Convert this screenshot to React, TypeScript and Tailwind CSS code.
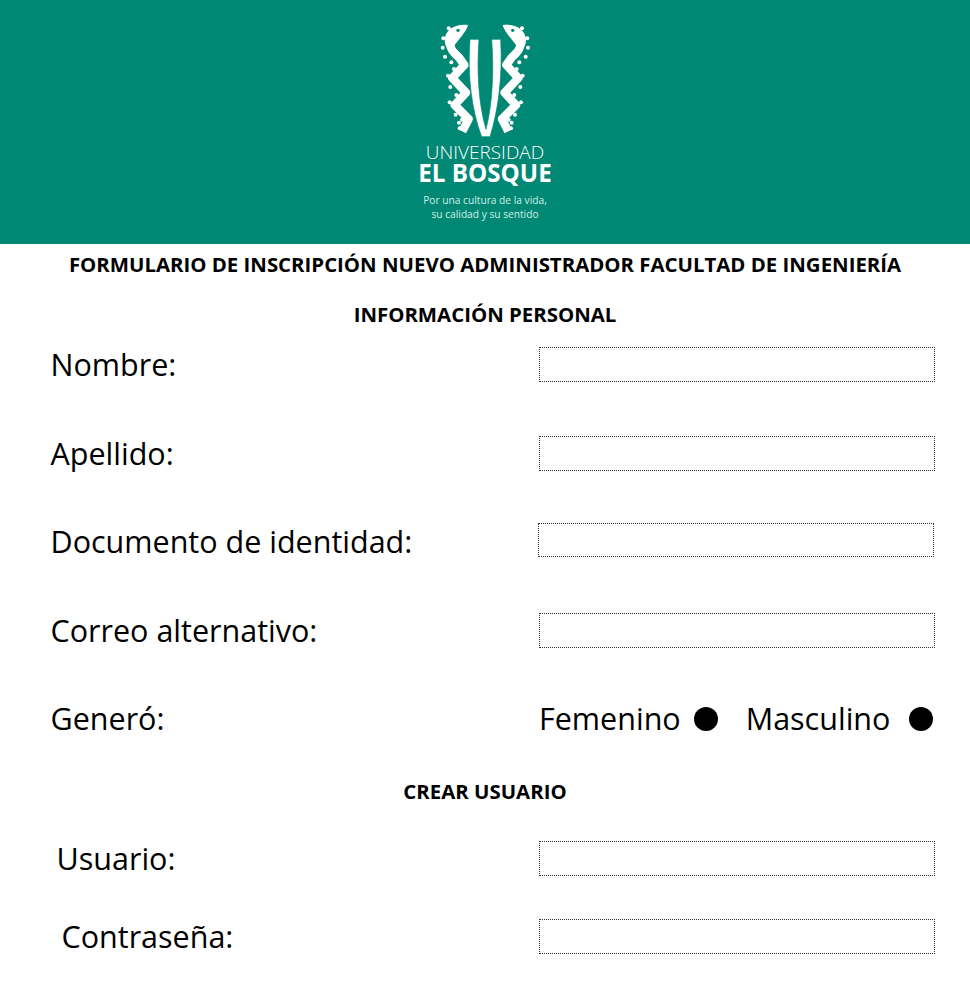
const font = "font-['Open_Sans',sans-serif]";

function Logo() {
  const dots = [
    [116, 55], [100, 85], [98, 113], [105, 140], [124, 157], [132, 177], [114, 197],
    [121, 231], [139, 255], [119, 277], [137, 314], [156, 329], [147, 338], [149, 355],
  ];
  const snake = (
    <>
      <path
        d="M120 92 C118 116 130 126 148 144 L163 165 L127 204 L168 248 L134 285 L176 327 L157 364"
        fill="none"
        stroke="#fff"
        strokeWidth="25"
        strokeLinejoin="round"
      />
      <path d="M104 92 C104 60 134 40 174 45 C170 62 152 82 138 100 C130 116 110 116 106 104Z" fill="#fff" />
      <circle cx="144" cy="61" r="5" fill="#008875" />
      {dots.map(([x, y]) => (
        <circle key={`${x}-${y}`} cx={x} cy={y} r="6" fill="#fff" />
      ))}
    </>
  );

  return (
    <svg viewBox="0 0 450 405" className="h-[135px] w-[150px]">
      <g>{snake}</g>
      <g transform="translate(452 0) scale(-1 1)">{snake}</g>
      <path
        d="M180 88 L207 88 C200 180 205 280 228 358 C248 280 252 180 245 88 L272 88 C278 200 265 300 240 380 L215 380 C185 300 172 200 180 88Z"
        fill="#fff"
        stroke="#008875"
        strokeWidth="2"
      />
    </svg>
  );
}

function Field({ className = "" }: { className?: string }) {
  return <div className={`h-[35px] w-[396px] border border-dotted border-[#333] bg-white ${className}`} />;
}

function Row({
  label,
  labelClass = "",
  fieldClass = "",
  className = "",
}: {
  label: string;
  labelClass?: string;
  fieldClass?: string;
  className?: string;
}) {
  return (
    <div className={`flex items-start ${className}`}>
      <span className={`w-[488.5px] text-[30.5px] leading-[35px] ${labelClass}`}>{label}</span>
      <Field className={fieldClass} />
    </div>
  );
}

export default function App() {
  return (
    <div className={`min-h-[1000px] bg-white text-black ${font}`}>
      <header className="flex h-[244px] flex-col items-center bg-[#008875] text-white">
        <div className="mt-[10px]">
          <Logo />
        </div>
        <p className="-mt-[2px] text-[19px] font-light leading-[19px]">UNIVERSIDAD</p>
        <p className="text-[24.2px] font-bold leading-[22px]">EL BOSQUE</p>
        <p className="mt-[9px] text-center text-[10.2px] leading-[14px] text-[#d5eee8]">
          Por una cultura de la vida,
          <br />
          su calidad y su sentido
        </p>
      </header>

      <h1 className="mt-[8px] text-center text-[20.4px] font-bold leading-[25px]">
        FORMULARIO DE INSCRIPCIÓN NUEVO ADMINISTRADOR FACULTAD DE INGENIERÍA
      </h1>
      <h2 className="mt-[25px] text-center text-[20.4px] font-bold leading-[25px]">
        INFORMACIÓN PERSONAL
      </h2>

      <section className="pl-[50.5px]">
        <Row label="Nombre:" className="mt-[20px]" />
        <Row label="Apellido:" className="mt-[54px]" />
        <Row label="Documento de identidad:" labelClass="pt-[1px]" fieldClass="-ml-[1px] !h-[34px]" className="mt-[52px]" />
        <Row label="Correo alternativo:" className="mt-[54px]" />
        <div className="mt-[53px] flex items-center text-[30.5px] leading-[35px]">
          <span className="w-[488.5px]">Generó:</span>
          <span>Femenino</span>
          <span className="ml-[13px] h-[24px] w-[24px] rounded-full bg-black" />
          <span className="ml-[28px]">Masculino</span>
          <span className="ml-[19px] h-[24px] w-[24px] rounded-full bg-black" />
        </div>
      </section>

      <h2 className="mt-[43px] text-center text-[20.4px] font-bold leading-[25px]">CREAR USUARIO</h2>

      <section className="pl-[50.5px]">
        <Row label="Usuario:" labelClass="pl-[6px]" className="mt-[37px]" />
        <Row label="Contraseña:" labelClass="pl-[11px]" className="mt-[43px]" />
      </section>
    </div>
  );
}
